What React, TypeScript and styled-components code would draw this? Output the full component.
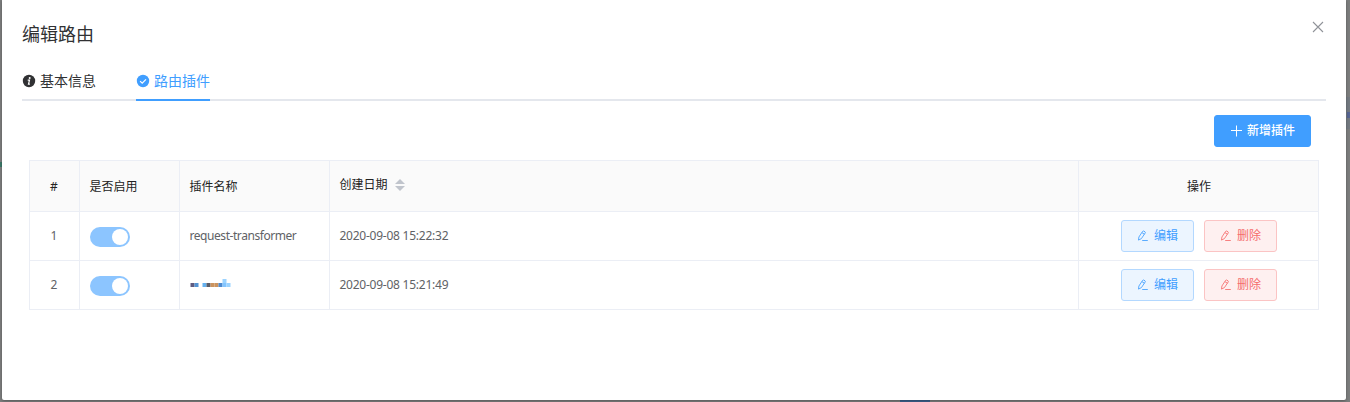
import React from "react";
import styled, { createGlobalStyle, css } from "styled-components";

const Global = createGlobalStyle`
  *, *::before, *::after { box-sizing: border-box; }
  html, body, #root { margin: 0; height: 100%; overflow: hidden; }
  body {
    font-family: "Noto Sans", "Noto Sans CJK SC", sans-serif;
    font-size: 12px;
    color: #606266;
  }
`;

const Backdrop = styled.div`
  height: 402px;
  padding: 0 4px 2px 2px;
  background: #7c7d7d;
  position: relative;
`;

const Hint = styled.i<{ $x: number; $y: number; $w: number; $h: number; $c: string }>`
  position: absolute;
  left: ${(p) => p.$x}px;
  top: ${(p) => p.$y}px;
  width: ${(p) => p.$w}px;
  height: ${(p) => p.$h}px;
  background: ${(p) => p.$c};
`;

const Dialog = styled.section`
  position: relative;
  height: 400px;
  padding: 20px 20px 0;
  background: #fff;
  border-radius: 0 0 2px 2px;
  box-shadow: 0 1px 3px rgba(0, 0, 0, 0.3);
`;

const Header = styled.header`
  display: flex;
  justify-content: space-between;
  height: 42px;
`;

const Title = styled.h2`
  margin: 2px 0 0;
  font-size: 18px;
  font-weight: 400;
  line-height: 24px;
  color: #303133;
`;

const Close = styled.button`
  width: 16px;
  height: 16px;
  margin: -1px 0 0;
  padding: 0;
  border: 0;
  background: none;
  color: #909399;
  svg { display: block; }
`;

const TabBar = styled.nav`
  display: flex;
  gap: 40px;
  height: 39px;
  box-shadow: inset 0 -2px #e4e7ed;
`;

const Tab = styled.a<{ $active?: boolean }>`
  display: flex;
  align-items: center;
  gap: 4px;
  height: 39px;
  font-size: 14px;
  color: ${(p) => (p.$active ? "#409eff" : "#303133")};
  border-bottom: 2px solid ${(p) => (p.$active ? "#409eff" : "transparent")};
  svg { display: block; }
`;

const Toolbar = styled.div`
  display: flex;
  justify-content: flex-end;
  padding: 14px 15px 13px 0;
`;

const tones = {
  primary: css`color: #fff; background: #409eff; border-color: #409eff; font-weight: 500;`,
  edit: css`color: #409eff; background: #ecf5ff; border-color: #b3d8ff;`,
  remove: css`color: #f56c6c; background: #fef0f0; border-color: #fbc4c4;`,
};

const Button = styled.button<{ $tone: keyof typeof tones }>`
  display: inline-flex;
  align-items: center;
  gap: 5px;
  height: 32px;
  padding: 0 15px;
  border: 1px solid;
  border-radius: 3px;
  font: inherit;
  line-height: 16px;
  white-space: nowrap;
  svg { display: block; flex: none; }
  ${(p) => tones[p.$tone]}
`;

const Table = styled.div`
  width: 1290px;
  margin-left: 7px;
  border: solid #ebeef5;
  border-width: 1px 0 0 1px;
`;

const Row = styled.div<{ $head?: boolean }>`
  display: grid;
  grid-template-columns: 50px 100px 150px 749px 240px;
  height: ${(p) => (p.$head ? 51 : 49)}px;
  color: ${(p) => (p.$head ? "#222" : "#606266")};
  background: ${(p) => (p.$head ? "#fafafa" : "#fff")};
`;

const Cell = styled.div<{ $center?: boolean; $lift?: boolean }>`
  display: flex;
  align-items: center;
  justify-content: ${(p) => (p.$center ? "center" : "flex-start")};
  gap: 10px;
  padding: 0 9px ${(p) => (p.$lift ? 2 : 0)}px ${(p) => (p.$center ? 10 : 9.5)}px;
  border: solid #ebeef5;
  border-width: 0 1px 1px 0;
`;

const IndexCell = styled(Cell)`
  padding-left: 9px;
  padding-right: 10px;
`;

const Label = styled.span<{ $track?: number; $lift?: number }>`
  letter-spacing: ${(p) => p.$track ?? 0}px;
  padding-bottom: ${(p) => p.$lift ?? 0}px;
`;

const TabText = styled.span`
  padding-bottom: 2px;
`;

const Switch = styled.span`
  display: flex;
  justify-content: flex-end;
  width: 40px;
  height: 20px;
  margin: 3px 0 0 0.5px;
  padding: 2px;
  border-radius: 10px;
  background: #8cc5ff;
  &::after {
    content: "";
    width: 16px;
    height: 16px;
    border-radius: 50%;
    background: #fff;
  }
`;

const Sorter = styled.span`
  display: flex;
  flex-direction: column;
  gap: 2px;
  margin: 0 0 3px -2.5px;
  &::before, &::after { content: ""; border: 5px solid transparent; }
  &::before { border-top: 0; border-bottom-color: #c0c4cc; }
  &::after { border-bottom: 0; border-top-color: #c0c4cc; }
`;

const PenIcon = () => (
  <svg width="12" height="12" viewBox="0 0 12 12" fill="none" stroke="currentColor" strokeWidth=".85" strokeLinejoin="round">
    <path d="M1.5 10.1 1.9 7 5.6 1.4Q6.1.7 6.8 1.1L8 1.8Q8.6 2.3 8.2 3L4.4 8.6 1.5 10.1ZM4.9 2.6 7.4 4.2M5.2 10.5H10.8" />
  </svg>
);

const PlusIcon = () => (
  <svg width="12" height="12" viewBox="0 0 12 12" stroke="currentColor">
    <path d="M1 5.5h11M6.5.5v11" />
  </svg>
);

const InfoIcon = () => (
  <svg width="14" height="14" viewBox="0 0 14 14">
    <circle cx="7" cy="7" r="6.2" fill="currentColor" />
    <circle cx="7.7" cy="3.9" r="1" fill="#fff" />
    <path d="M5.7 6.1H7.5L6.5 10.1H7.9" fill="none" stroke="#fff" strokeWidth="1.2" />
  </svg>
);

const CheckIcon = () => (
  <svg width="14" height="14" viewBox="0 0 14 14">
    <circle cx="7" cy="7" r="6.2" fill="currentColor" />
    <path d="m4.1 7.1 2.1 2 3.8-3.8" fill="none" stroke="#fff" strokeWidth="1.2" />
  </svg>
);

const MASK: [number, number, number, string][] = [
  [0, 4, 4, "#5f5b80"], [4, 4, 4, "#5292d2"], [12, 4, 4, "#65b1ef"], [16, 4, 4, "#5b5d68"],
  [20, 4, 4, "#ca935f"], [24, 4, 4, "#ca935f"], [28, 4, 4, "#4e8ace"], [32, 0, 4, "#9bd3ff"],
  [32, 4, 4, "#83c5ff"], [36, 4, 4, "#9bd3ff"],
];

const MaskedName = () => (
  <svg width="41" height="11" viewBox="0 0 41 11">
    {MASK.map(([x, y, s, c]) => (
      <rect key={`${x}-${y}`} x={x + 0.5} y={y} width={s} height={s} fill={c} />
    ))}
  </svg>
);

const rows = [
  { id: 1, name: "request-transformer", date: "2020-09-08 15:22:32" },
  { id: 2, name: null, date: "2020-09-08 15:21:49" },
];

export default function App() {
  return (
    <>
      <Global />
      <Backdrop>
        <Hint $x={0} $y={162} $w={2} $h={5} $c="#3c7868" />
        <Hint $x={1346} $y={97} $w={4} $h={32} $c="#737980" />
        <Hint $x={1347} $y={112} $w={3} $h={6} $c="#566592" />
        <Hint $x={900} $y={400} $w={30} $h={2} $c="#3d608c" />
        <Dialog>
          <Header>
            <Title>编辑路由</Title>
            <Close aria-label="close">
              <svg width="16" height="16" viewBox="0 0 16 16" stroke="currentColor" strokeWidth="1.1">
                <path d="m3 3 10 10M13 3 3 13" />
              </svg>
            </Close>
          </Header>
          <TabBar>
            <Tab><InfoIcon /><TabText>基本信息</TabText></Tab>
            <Tab $active><CheckIcon /><TabText>路由插件</TabText></Tab>
          </TabBar>
          <Toolbar>
            <Button $tone="primary"><PlusIcon />新增插件</Button>
          </Toolbar>
          <Table>
            <Row $head>
              <IndexCell $center>#</IndexCell>
              <Cell>是否启用</Cell>
              <Cell>插件名称</Cell>
              <Cell><Label $lift={4}>创建日期</Label><Sorter /></Cell>
              <Cell $center>操作</Cell>
            </Row>
            {rows.map((r) => (
              <Row key={r.id}>
                <IndexCell $center $lift>{r.id}</IndexCell>
                <Cell $lift><Switch /></Cell>
                <Cell $lift>{r.name ? <Label $track={-0.44}>{r.name}</Label> : <MaskedName />}</Cell>
                <Cell $lift><Label $track={-0.24}>{r.date}</Label></Cell>
                <Cell $center>
                  <Button $tone="edit"><PenIcon />编辑</Button>
                  <Button $tone="remove"><PenIcon />删除</Button>
                </Cell>
              </Row>
            ))}
          </Table>
        </Dialog>
      </Backdrop>
    </>
  );
}
